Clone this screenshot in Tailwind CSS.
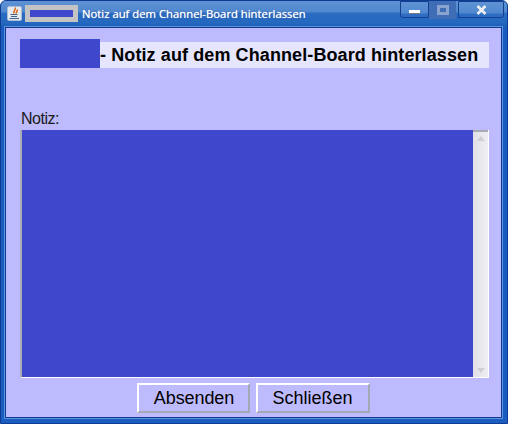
<!DOCTYPE html>
<html>
<head>
<meta charset="utf-8">
<script src="https://cdn.jsdelivr.net/npm/@tailwindcss/browser@4"></script>
</head>
<body class="m-0 overflow-hidden">
<div class="w-[508px] h-[424px] flex flex-col bg-[#1a5cc0] font-['Liberation_Sans',sans-serif] rounded-t-[6px] overflow-hidden border border-[#0e3c94]">
  <div class="h-[26px] shrink-0 flex items-start bg-[linear-gradient(to_bottom,#5f92d4_0,#4f88cf_11px,#2a6cc2_12px,#2468bf_22px,#1a5cb6_26px)] relative">
    <div class="ml-[6px] mt-[5px] w-[15px] h-[15px] rounded-[2px] bg-[#e4e8ef] border border-[#a9bcd6] flex items-center justify-center">
      <svg width="13" height="13" viewBox="0 0 13 13" fill="none">
        <path d="M7 0.5 C8.5 2.5 5 3.5 6 6.5 M9 2.5 C10 3.5 8 4.5 8.3 6.5" stroke="#dd6414" stroke-width="1.5"/>
        <path d="M2.5 7.5 H9.5 M3 9.5 H9 M1.5 11.5 H11" stroke="#41648a" stroke-width="1.1"/>
      </svg>
    </div>
    <div class="ml-[3px] mt-[4px] w-[53px] h-[17px] bg-[#c3c3c3] flex items-center justify-center">
      <div class="w-[43px] h-[7px] bg-[#3f48cc]"></div>
    </div>
    <div class="ml-[4px] mt-[5px] text-[11.3px] leading-[16px] text-white font-['Open_Sans',sans-serif] [text-shadow:0_0_1px_#fff,0_0_2px_#0b3d91]">Notiz auf dem Channel-Board hinterlassen</div>
    <div class="absolute left-[399px] top-0 h-[17px] flex">
      <div class="w-[29px] h-[17px] border border-[#12408f] rounded-bl-[3px] bg-[linear-gradient(to_bottom,#5f92d4_0,#5088cf_11px,#2f6ec2_12px,#2a6ac0_17px)] flex items-center justify-center">
        <div class="w-[11px] h-[4px] bg-white border-b border-[#778] mt-[5px]"></div>
      </div>
      <div class="w-[27px] h-[18px] bg-[#3f6eb6] flex items-center justify-center">
        <div class="w-[12px] h-[10px] border-[3px] border-[#89a5cf]"></div>
      </div>
      <div class="ml-[2px] w-[46px] h-[17px] border border-[#12408f] rounded-br-[3px] bg-[linear-gradient(to_bottom,#5f92d4_0,#5088cf_11px,#2f6ec2_12px,#2a6ac0_17px)] flex items-center justify-center">
        <svg width="11" height="10" viewBox="0 0 11 10"><path d="M1.5 1 L9.5 9 M9.5 1 L1.5 9" stroke="#eef0f4" stroke-width="2.6"/></svg>
      </div>
    </div>
  </div>
  <div class="ml-[4px] mb-[4px] w-[497px] h-[391px] shrink-0 border-t border-t-[#0e3c94] border-x border-b border-x-[#0e3c94] border-b-[#0e3c94] outline outline-[#5f92d8] bg-[#bdbbfd] flex flex-col pl-[14px] relative">
    <div class="mt-[14px] h-[26px] w-[469px] bg-[#e6e5fe] flex items-center relative">
      <div class="absolute left-0 bottom-0 h-[29px] w-[80px] bg-[#3f48cc]"></div>
      <div class="ml-[80px] text-[18px] tracking-[0.1px] leading-[26px] font-bold text-black whitespace-nowrap">- Notiz auf dem Channel-Board hinterlassen</div>
    </div>
    <div class="mt-[41px] ml-px h-[21px] text-[16px] tracking-[-0.5px] leading-[19px] text-[#1a1a1a]">Notiz:</div>
    <div class="w-[469px] h-[248px] flex border-l-2 border-l-[#a9acb6] border-b border-b-white">
      <div class="flex-1 bg-[#3f48cc]"></div>
      <div class="w-[16px] bg-linear-to-r from-[#e0e0e6] to-[#efeff3] border-r border-r-white flex flex-col justify-between items-center">
        <div class="w-full">
          <div class="h-[2px] bg-[#a9acb6]"></div>
          <svg class="mx-auto mt-[4px]" width="8" height="5" viewBox="0 0 8 5"><path d="M4 0 L8 5 H0 Z" fill="#cfcfd6"/></svg>
        </div>
        <svg class="mb-[4px]" width="8" height="5" viewBox="0 0 8 5"><path d="M0 0 H8 L4 5 Z" fill="#cfcfd6"/></svg>
      </div>
    </div>
    <div class="mt-[5px] w-[469px] flex justify-center gap-[6px] pr-[3px]">
      <div class="w-[113px] h-[30px] pl-[2px] border-2 border-t-white border-l-white border-r-[#a3a9b5] border-b-[#a3a9b5] flex items-center justify-center text-[18px] tracking-[-0.1px] text-black">Absenden</div>
      <div class="w-[114px] h-[30px] border-2 border-t-white border-l-white border-r-[#a3a9b5] border-b-[#a3a9b5] flex items-center justify-center text-[18px] text-black">Schließen</div>
    </div>
  </div>
</div>
</body>
</html>
